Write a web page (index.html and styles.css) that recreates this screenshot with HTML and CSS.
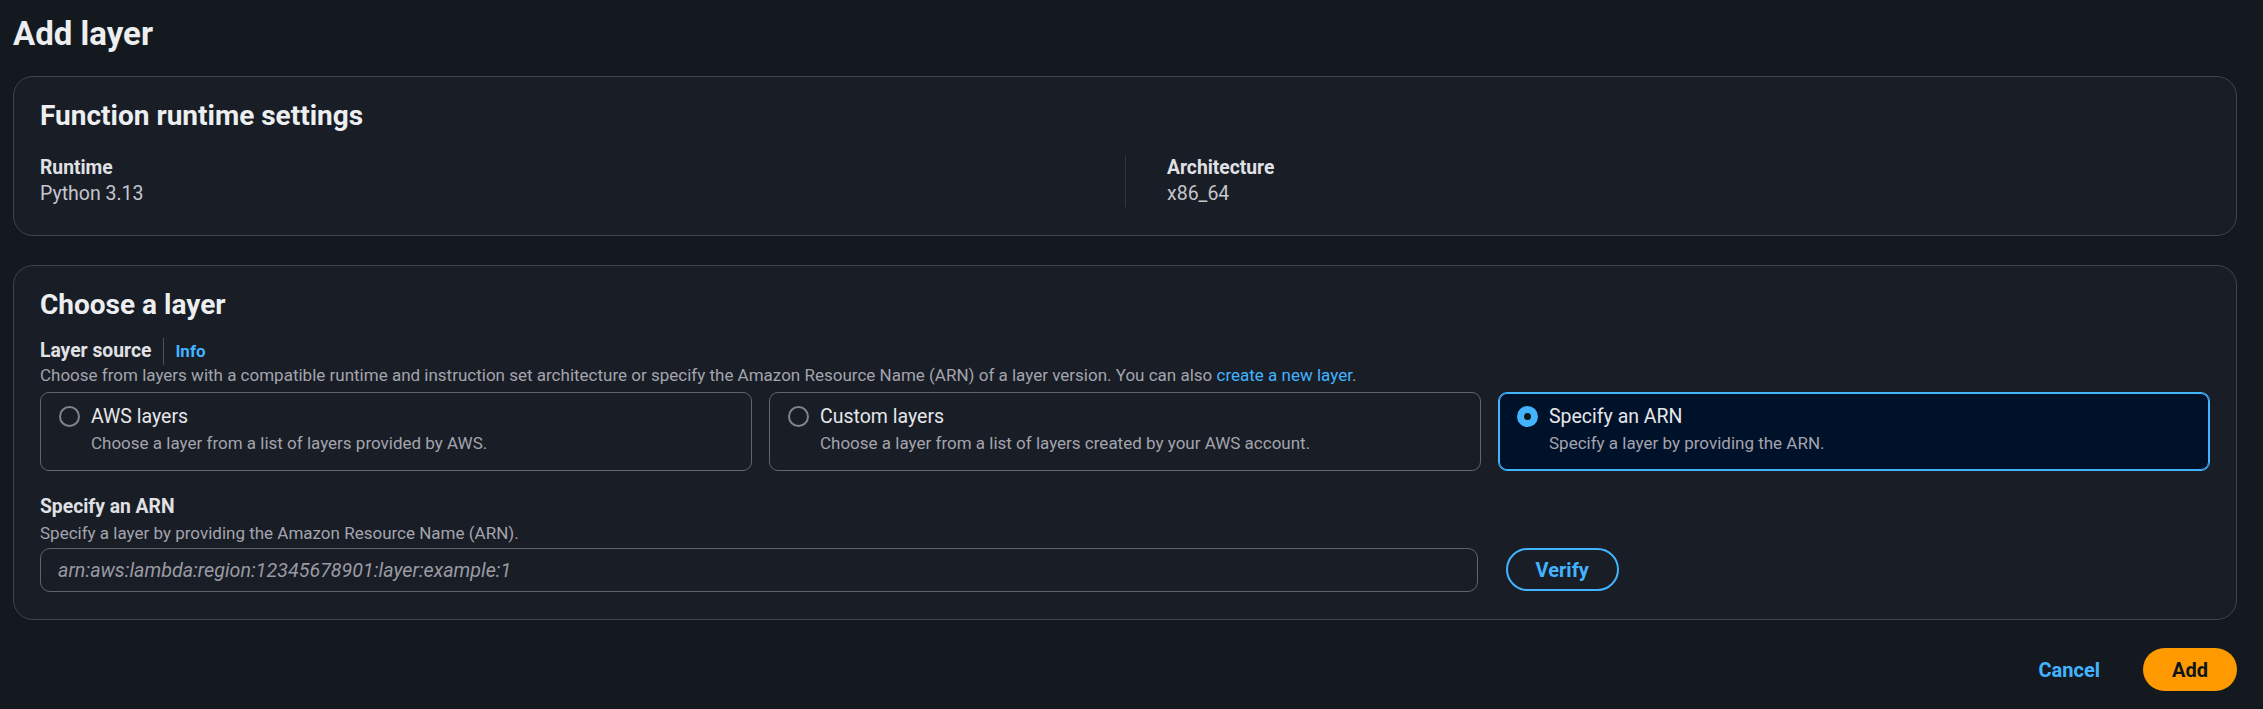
FILE: index.html
```html
<!DOCTYPE html>
<html lang="en">
<head>
<meta charset="utf-8">
<title>Add layer</title>
<link rel="stylesheet" href="styles.css">
</head>
<body>
<main class="page">
  <h1 class="page-title">Add layer</h1>

  <section class="card">
    <h2 class="card-title">Function runtime settings</h2>
    <div class="kv-grid">
      <div class="kv-col">
        <div class="kv-label">Runtime</div>
        <div class="kv-value">Python 3.13</div>
      </div>
      <div class="kv-col kv-col-divided">
        <div class="kv-label">Architecture</div>
        <div class="kv-value">x86_64</div>
      </div>
    </div>
  </section>

  <section class="card card-second">
    <h2 class="card-title">Choose a layer</h2>

    <div class="field field-source">
      <div class="field-label-row">
        <span class="field-label">Layer source</span>
        <span class="label-divider"></span>
        <a class="info-link" href="#">Info</a>
      </div>
      <div class="field-desc">Choose from layers with a compatible runtime and instruction set architecture or specify the Amazon Resource Name (ARN) of a layer version. You can also <a class="link" href="#">create a new layer</a>.</div>
      <div class="tiles">
        <div class="tile">
          <span class="radio"></span>
          <div class="tile-text">
            <div class="tile-title">AWS layers</div>
            <div class="tile-desc">Choose a layer from a list of layers provided by AWS.</div>
          </div>
        </div>
        <div class="tile">
          <span class="radio"></span>
          <div class="tile-text">
            <div class="tile-title">Custom layers</div>
            <div class="tile-desc">Choose a layer from a list of layers created by your AWS account.</div>
          </div>
        </div>
        <div class="tile tile-selected">
          <span class="radio radio-checked"></span>
          <div class="tile-text">
            <div class="tile-title">Specify an ARN</div>
            <div class="tile-desc">Specify a layer by providing the ARN.</div>
          </div>
        </div>
      </div>
    </div>

    <div class="field field-arn">
      <div class="field-label">Specify an ARN</div>
      <div class="field-desc">Specify a layer by providing the Amazon Resource Name (ARN).</div>
      <div class="input-row">
        <input class="text-input" type="text" placeholder="arn:aws:lambda:region:12345678901:layer:example:1">
        <button class="btn btn-normal" type="button">Verify</button>
      </div>
    </div>
  </section>

  <div class="actions">
    <button class="btn btn-link" type="button">Cancel</button>
    <button class="btn btn-primary" type="button">Add</button>
  </div>
</main>
</body>
</html>
```
FILE: styles.css
```css
* { box-sizing: border-box; }

html, body {
  margin: 0;
  padding: 0;
  background: #141920;
}

body {
  font-family: Roboto, "Open Sans", "Liberation Sans", sans-serif;
  color: #c6c6cd;
  font-size: 19.5px;
  line-height: 26px;
}

.page {
  padding: 14px 26px 0 13px;
}

.page-title {
  margin: 0;
  font-size: 33px;
  line-height: 40px;
  font-weight: 700;
  color: #eceef0;
}

.card {
  margin-top: 22px;
  background: #181d26;
  border: 1px solid #3e444e;
  border-radius: 20px;
  padding: 21px 26px 28px 26px;
}

.card-second {
  margin-top: 29px;
  padding-bottom: 27px;
}

.card-title {
  margin: 0;
  font-size: 28px;
  line-height: 36px;
  font-weight: 700;
  color: #eceef0;
}

.kv-grid {
  margin-top: 21px;
  display: grid;
  grid-template-columns: 1fr 1fr;
}

.kv-col-divided {
  border-left: 1px solid #2f353e;
  padding-left: 41px;
}

.kv-label {
  font-size: 19.3px;
  line-height: 26px;
  font-weight: 700;
  color: #e0e1e5;
}

.kv-value {
  font-size: 19.5px;
  line-height: 26px;
  color: #c6c6cd;
}

.field-source {
  margin-top: 15px;
}

.field-label-row {
  display: flex;
  align-items: center;
  height: 26px;
}

.field-label {
  font-size: 19.3px;
  line-height: 26px;
  font-weight: 700;
  color: #e0e1e5;
}

.label-divider {
  width: 1px;
  height: 27px;
  background: #4b515b;
  margin: 0 11px 0 12px;
}

.info-link {
  font-size: 17px;
  font-weight: 700;
  color: #42b4ff;
  text-decoration: none;
  line-height: 26px;
}

.field-desc {
  font-size: 17px;
  line-height: 22px;
  color: #a4a4ad;
}

.field-arn .field-desc {
  margin-top: 2px;
}

.link {
  color: #42b4ff;
  text-decoration: none;
}

.tiles {
  margin-top: 6px;
  display: grid;
  grid-template-columns: repeat(3, 1fr);
  gap: 17px;
}

.tile {
  display: flex;
  align-items: flex-start;
  gap: 11px;
  height: 79px;
  border: 1px solid #60656e;
  border-radius: 9px;
  padding: 11px 18px 16px 18px;
  background: #181d26;
}

.tile-selected {
  background: #00112a;
  border-color: #42b4ff;
  box-shadow: inset 0 0 0 1px #42b4ff;
}

.radio {
  flex: 0 0 21px;
  width: 21px;
  height: 21px;
  margin-top: 2px;
  border-radius: 50%;
  border: 2px solid #80848c;
}

.radio-checked {
  border: 7px solid #42b4ff;
  background: #0f141a;
}

.tile-title {
  font-size: 19.5px;
  line-height: 26px;
  color: #e6e7ea;
}

.tile-desc {
  margin-top: 2px;
  font-size: 17px;
  line-height: 22px;
  color: #a4a4ad;
}

.field-arn {
  margin-top: 23px;
}

.input-row {
  margin-top: 4px;
  display: flex;
  align-items: flex-start;
  gap: 28px;
}

.text-input {
  width: calc(66.67% - 9px);
  height: 44px;
  border: 1px solid #5f646d;
  border-radius: 10px;
  background: #181d26;
  padding: 0 17px;
  font-family: Roboto, "Open Sans", sans-serif;
  font-size: 19.7px;
  color: #c6c6cd;
  outline: none;
}

.text-input::placeholder {
  color: #9a9aa3;
  font-style: italic;
}

.btn {
  font-family: Roboto, "Open Sans", sans-serif;
  font-size: 20px;
  font-weight: 700;
  height: 43px;
  line-height: 26px;
  border-radius: 22px;
  padding: 0 28px;
  cursor: pointer;
}

.btn-normal {
  width: 113px;
  padding: 0;
  background: transparent;
  border: 2px solid #42b4ff;
  color: #42b4ff;
}

.actions {
  margin-top: 28px;
  display: flex;
  justify-content: flex-end;
  gap: 15px;
}

.btn-link {
  background: transparent;
  border: none;
  color: #42b4ff;
}

.btn-primary {
  width: 94px;
  padding: 0;
  background: #ff9900;
  border: none;
  color: #0f141a;
}
```
